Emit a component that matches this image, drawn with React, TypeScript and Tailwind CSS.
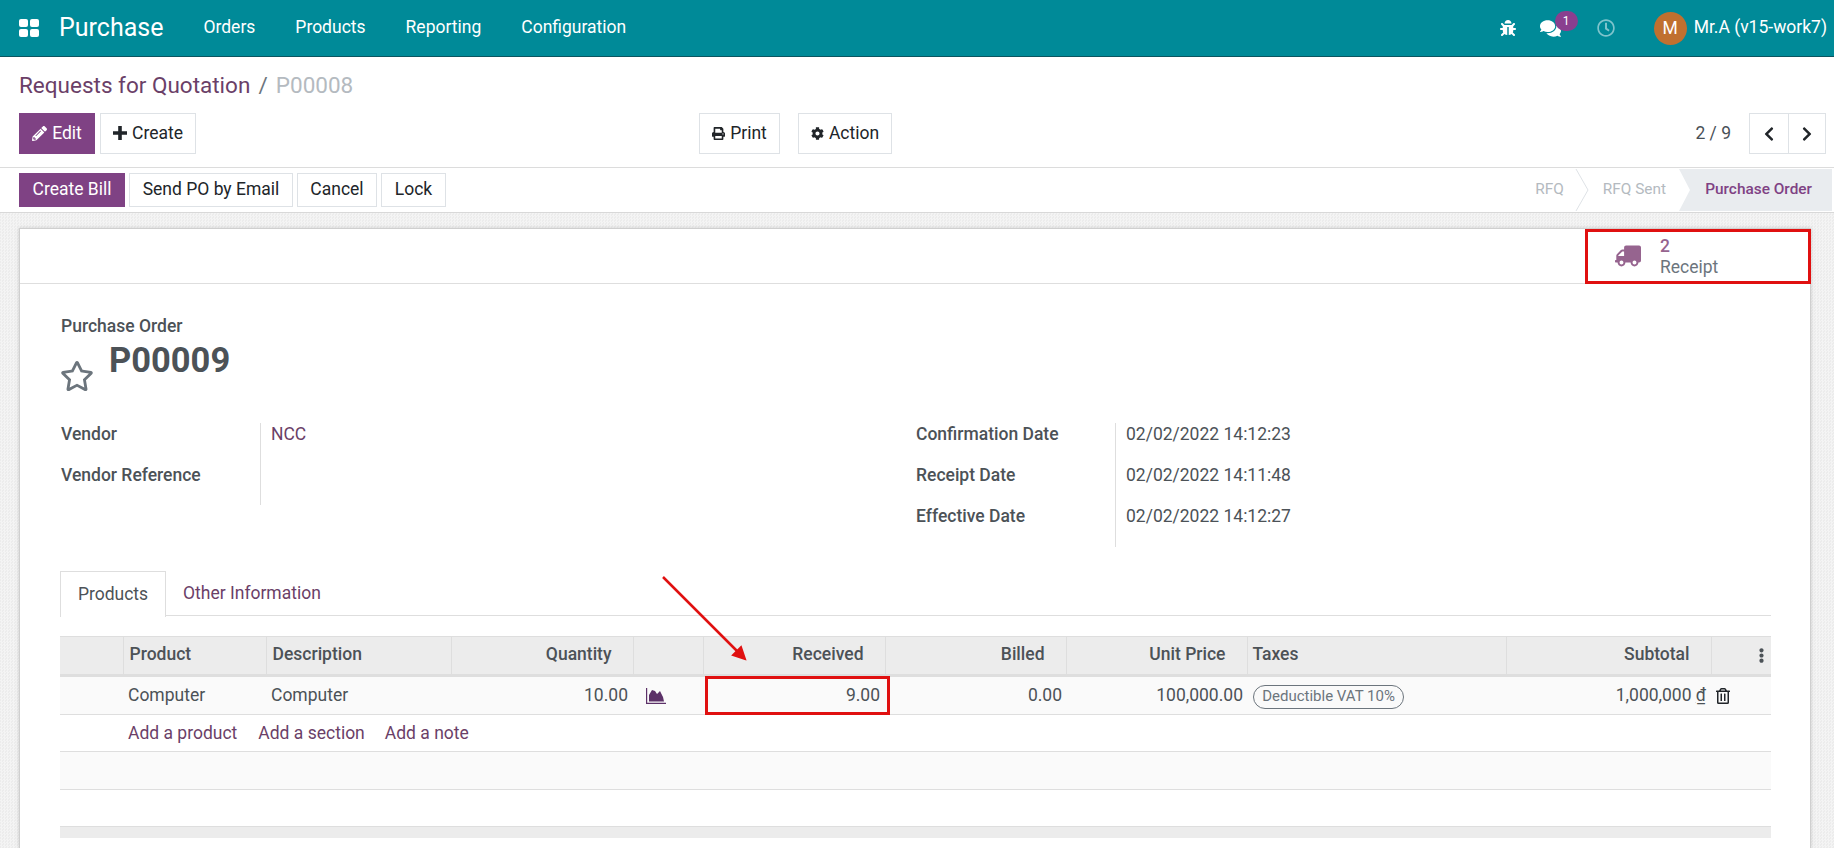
import React from 'react';
import {
  FaBug,
  FaChevronLeft,
  FaChevronRight,
  FaCog,
  FaComments,
  FaEllipsisV,
  FaPencilAlt,
  FaPrint,
  FaRegClock,
  FaRegStar,
  FaRegTrashAlt,
  FaTruck,
} from 'react-icons/fa';

const navItems = ['Orders', 'Products', 'Reporting', 'Configuration'];

function Navbar() {
  return (
    <header className="flex h-[57px] items-center border-b border-[#0b5560] bg-[#008a98] text-white">
      <svg className="ml-[19px] h-[18px] w-[20px]" viewBox="0 0 20 18" fill="currentColor">
        <rect x="0" y="0" width="9" height="8" rx="2" />
        <rect x="11" y="0" width="9" height="8" rx="2" />
        <rect x="0" y="10" width="9" height="8" rx="2" />
        <rect x="11" y="10" width="9" height="8" rx="2" />
      </svg>
      <span className="ml-[20px] pb-[1px] text-[25px]">Purchase</span>
      <nav className="ml-[40px] flex gap-[40px] pb-[1px] text-[17.5px]">
        {navItems.map((item) => (
          <span key={item}>{item}</span>
        ))}
      </nav>
      <div className="ml-auto flex items-center pr-[7px]">
        <FaBug className="h-[16px] w-[16px]" />
        <div className="relative ml-[24px]">
          <FaComments className="h-[21px] w-[21px]" />
          <span className="absolute -top-[7px] left-[15px] flex h-[20px] w-[23px] items-center justify-center rounded-full bg-[#8a3f8f] text-[12px]">
            1
          </span>
        </div>
        <FaRegClock className="ml-[36px] h-[18px] w-[18px] text-[#7fc4cc]" />
        <span className="ml-[39px] flex h-[33px] w-[33px] items-center justify-center rounded-full bg-[#c0702f] text-[17.5px]">
          M
        </span>
        <span className="ml-[7px] pb-[1px] text-[17.5px]">Mr.A (v15-work7)</span>
      </div>
    </header>
  );
}

function ControlPanel() {
  return (
    <div className="border-b border-[#dcdcdc] bg-white px-[19px] pt-[14px] pb-[13px]">
      <div className="text-[22.5px] leading-[29px] text-[#6b3f68]">
        Requests for Quotation <span className="mx-[2.5px] text-[#6c757d]">/</span>{' '}
        <span className="text-[#b4bac0]">P00008</span>
      </div>
      <div className="mt-[13px] flex h-[41px] items-stretch text-[17.5px] text-[#212529]">
        <div className="flex w-[680px] gap-[5px]">
          <button className="flex w-[76px] items-center justify-center gap-[5px] bg-[#7f4284] pb-[1px] text-white">
            <FaPencilAlt className="h-[15px] w-[15px]" /> Edit
          </button>
          <button className="flex w-[96px] items-center justify-center gap-[5px] border border-[#dee2e6] bg-white pb-[1px]">
            <svg className="h-[14px] w-[14px]" viewBox="0 0 14 14" fill="currentColor">
              <path d="M5.2 0h3.6v5.2H14v3.6H8.8V14H5.2V8.8H0V5.2h5.2z" />
            </svg>
            Create
          </button>
        </div>
        <div className="flex gap-[18px]">
          <button className="flex w-[81px] items-center justify-center gap-[5px] border border-[#dee2e6] bg-white pb-[1px]">
            <FaPrint className="h-[13px] w-[13px]" /> Print
          </button>
          <button className="flex w-[94px] items-center justify-center gap-[5px] border border-[#dee2e6] bg-white pb-[1px]">
            <FaCog className="h-[13px] w-[13px]" /> Action
          </button>
        </div>
        <div className="ml-auto -mr-[11px] flex items-center">
          <span className="pb-[1px] text-[#495057]">2 / 9</span>
          <div className="ml-[18px] flex h-full w-[77px] border border-[#dee2e6]">
            <span className="flex w-[39px] items-center justify-center border-r border-[#dee2e6]">
              <FaChevronLeft className="h-[16px] w-[16px]" />
            </span>
            <span className="flex flex-1 items-center justify-center">
              <FaChevronRight className="h-[16px] w-[16px]" />
            </span>
          </div>
        </div>
      </div>
    </div>
  );
}

function StatusBar() {
  return (
    <div className="flex h-[45px] items-center border-b border-[#d8d8d8] bg-white pl-[19px] pr-[2px]">
      <div className="flex gap-[4px] text-[17.5px] text-[#212529]">
        <button className="h-[34px] w-[106px] bg-[#7f4284] pb-[1px] text-white">Create Bill</button>
        <button className="h-[34px] w-[164px] border border-[#dee2e6] pb-[1px]">Send PO by Email</button>
        <button className="h-[34px] w-[80px] border border-[#dee2e6] pb-[1px]">Cancel</button>
        <button className="h-[34px] w-[65px] border border-[#dee2e6] pb-[1px]">Lock</button>
      </div>
      <div className="ml-auto flex h-[42px] items-center text-[15.4px] text-[#b4bac0]">
        <span>RFQ</span>
        <svg className="ml-[11px] h-[42px] w-[14px]" viewBox="0 0 14 42" fill="none" stroke="#dee2e6">
          <path d="M1 0l12 21L1 42" />
        </svg>
        <span className="ml-[14px]">RFQ Sent</span>
        <span className="ml-[13px] flex h-full w-[153px] items-center justify-end bg-[#e9ecef] pr-[20px] font-medium text-[#7f4284] [clip-path:polygon(0_0,100%_0,100%_100%,0_100%,11px_50%)]">
          Purchase Order
        </span>
      </div>
    </div>
  );
}

function Field({ label, value, link }: { label: string; value?: string; link?: boolean }) {
  return (
    <div className="flex h-[41px] items-center text-[17.5px] text-[#4c5257]">
      <span className="w-[199px] font-medium">{label}</span>
      <span className={link ? 'pl-[11px] text-[#6b3f68]' : 'pl-[11px]'}>{value}</span>
    </div>
  );
}

const thRight = 'border-l border-[#dedede] pb-[2px] pr-[21px] text-right font-medium';
const thLeft = 'border-l border-[#dedede] pb-[2px] pl-[6px] text-left font-medium';

function OrderLines() {
  return (
    <table className="-ml-px mt-[20px] w-[1711px] table-fixed border-collapse text-[17.5px] text-[#4c5257]">
      <colgroup>
        <col className="w-[63px]" />
        <col className="w-[143px]" />
        <col className="w-[185px]" />
        <col className="w-[182px]" />
        <col className="w-[70px]" />
        <col className="w-[182px]" />
        <col className="w-[181px]" />
        <col className="w-[181px]" />
        <col className="w-[259px]" />
        <col className="w-[205px]" />
        <col className="w-[60px]" />
      </colgroup>
      <thead>
        <tr className="h-[39px] border-t border-b-[3px] border-t-[#dedede] border-b-[#dedede] bg-[#ececec]">
          <th />
          <th className={thLeft}>Product</th>
          <th className={thLeft}>Description</th>
          <th className={thRight}>Quantity</th>
          <th className="border-l border-[#dedede]" />
          <th className={thRight}>Received</th>
          <th className={thRight}>Billed</th>
          <th className={thRight}>Unit Price</th>
          <th className="border-l border-[#dedede] pb-[2px] pl-[5px] text-left font-medium">Taxes</th>
          <th className={thRight}>Subtotal</th>
          <th className="border-l border-[#dedede]">
            <FaEllipsisV className="ml-auto mr-[2px] h-[15px] w-[15px]" />
          </th>
        </tr>
      </thead>
      <tbody>
        <tr className="h-[39px] border-b border-[#dedede] bg-[#fafafa]">
          <td />
          <td className="pl-[5px]">Computer</td>
          <td className="pl-[5px]">Computer</td>
          <td className="pr-[5px] text-right">10.00</td>
          <td className="pl-[13px]">
            <svg className="h-[16px] w-[20px] text-[#5c3168]" viewBox="0 0 20 16" fill="currentColor">
              <path d="M0 0v16h20v-1.2H1.2V0z" />
              <path d="M3 13.5V7l3-5 3 1 2 3 3-3 3 6 1 4.5z" />
            </svg>
          </td>
          <td className="relative pr-[5px] text-right">
            9.00
            <span className="absolute -top-[1px] -right-[5px] -bottom-[1px] left-[2px] border-[3px] border-[#e01010]" />
          </td>
          <td className="pr-[4px] text-right">0.00</td>
          <td className="pr-[4px] text-right">100,000.00</td>
          <td className="pl-[6px]">
            <span className="inline-flex h-[24px] w-[151px] items-center justify-center rounded-full border border-[#6c757d] text-[15px] text-[#6c757d]">
              Deductible VAT 10%
            </span>
          </td>
          <td className="pr-[5px] text-right">
            1,000,000 <span className="underline">₫</span>
          </td>
          <td className="pl-[5px]">
            <FaRegTrashAlt className="h-[16px] w-[14px] text-[#212529]" />
          </td>
        </tr>
        <tr className="h-[37px] border-b border-[#dedede]">
          <td />
          <td colSpan={10} className="pl-[5px] text-[#6b3f68]">
            <span>Add a product</span>
            <span className="ml-[21px]">Add a section</span>
            <span className="ml-[20px]">Add a note</span>
          </td>
        </tr>
        <tr className="h-[38px] border-b border-[#dedede] bg-[#fafafa]">
          <td colSpan={11} />
        </tr>
        <tr className="h-[37px]">
          <td colSpan={11} />
        </tr>
        <tr className="h-[11px] border-t border-[#dedede] bg-[#ececec]">
          <td colSpan={11} />
        </tr>
      </tbody>
    </table>
  );
}

function FormSheet() {
  return (
    <div className="relative ml-[19px] mr-[23px] mt-[15px] flex-1 border-l border-t border-r border-[#cfcfcf] bg-white shadow-[0_0_4px_rgba(0,0,0,0.15)]">
      <div className="flex h-[55px] justify-end border-b border-[#dedede]">
        <div className="relative flex w-[225px] items-center">
          <FaTruck className="ml-[30px] h-[22px] w-[26px] -scale-x-100 text-[#96648f]" />
          <div className="ml-[19px] pt-[2px] text-[17.5px] leading-[21px]">
            <div className="font-medium text-[#96648f]">2</div>
            <div className="text-[#6c757d]">Receipt</div>
          </div>
          <span className="absolute -right-[1px] -bottom-[1px] left-0 top-0 border-[3px] border-[#e01010]" />
        </div>
      </div>
      <div className="pl-[41px] pt-[31px]">
        <div className="text-[17.5px] font-medium leading-[22px] text-[#4c5257]">Purchase Order</div>
        <div className="flex h-[71px] text-[#4c5257]">
          <FaRegStar className="-ml-px mt-[23px] h-[32px] w-[34px] text-[#6c757d]" />
          <h1 className="ml-[15px] mt-[3px] text-[34.5px] font-bold leading-[40px]">P00009</h1>
        </div>
        <div className="mt-[6px] flex">
          <div className="w-[855px]">
            <div className="relative">
              <Field label="Vendor" value="NCC" link />
              <Field label="Vendor Reference" />
              <span className="absolute left-[199px] top-[9px] h-[82px] border-l border-[#dedede]" />
            </div>
          </div>
          <div className="relative">
            <Field label="Confirmation Date" value="02/02/2022 14:12:23" />
            <Field label="Receipt Date" value="02/02/2022 14:11:48" />
            <Field label="Effective Date" value="02/02/2022 14:12:27" />
            <span className="absolute left-[199px] top-[9px] h-[124px] border-l border-[#dedede]" />
          </div>
        </div>
        <div className="-ml-px mt-[34px] flex h-[45px] w-[1711px] border-b border-[#dedede] text-[17.5px]">
          <span className="flex h-[46px] w-[106px] items-center justify-center border-l border-t border-r border-[#dedede] bg-white text-[#4c5257]">
            Products
          </span>
          <span className="ml-[17px] flex items-center text-[#6b3f68]">Other Information</span>
        </div>
        <OrderLines />
      </div>
      <svg className="absolute left-[641px] top-[346px] h-[90px] w-[90px]" viewBox="0 0 90 90" fill="none">
        <path d="M2 2L78 78" stroke="#e01010" strokeWidth="2.5" />
        <path d="M84 84L72 80L80 72Z" fill="#e01010" stroke="#e01010" strokeWidth="2" />
      </svg>
    </div>
  );
}

export default function App() {
  return (
    <div className="flex h-[848px] flex-col overflow-hidden bg-[#f1f1f1] bg-[repeating-conic-gradient(#f4f4f4_0_25%,#ececec_0_50%)] bg-[length:3px_3px] font-['Roboto',sans-serif]">
      <Navbar />
      <ControlPanel />
      <StatusBar />
      <FormSheet />
    </div>
  );
}
